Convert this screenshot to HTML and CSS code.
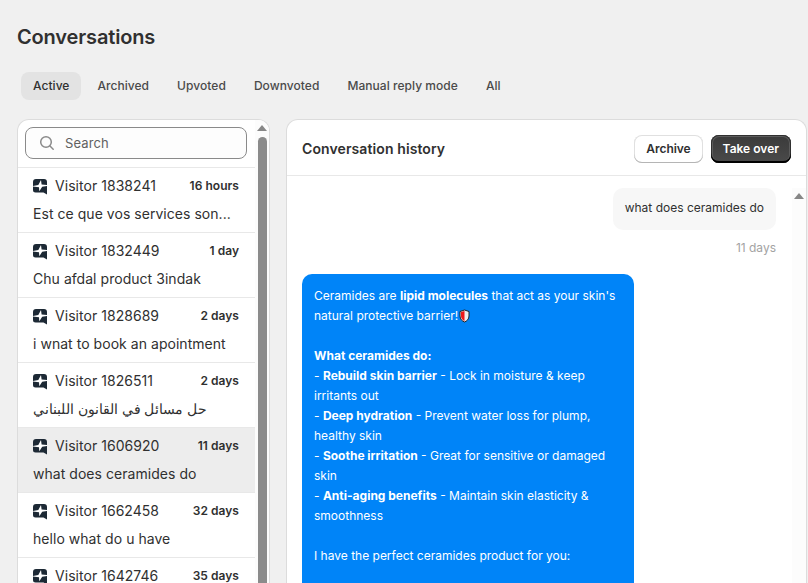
FILE: index.html
```html
<!DOCTYPE html>
<html lang="en">

<head>
	<meta charset="UTF-8">
	<meta name="viewport" content="width=device-width, initial-scale=1.0">
	<title>Conversations</title>
	<link rel="stylesheet" href="styles.css">
</head>

<body>
	<svg class="sprite" width="0" height="0">
		<symbol id="logo" viewBox="0 0 14 16">
			<path fill="#1d2935" d="M3 0h8A3 3 0 0 1 14 3V15.500L10.500 13.500H2.500A2.500 2.500 0 0 1 0 11V3A3 3 0 0 1 3 0z" />
			<path fill="#fff" d="M8 1L8.600 5.600L14 6V6.900L9.200 7.700L6.300 12.300L6 8.300L0 7.600V6.900L5.300 5.900z" />
		</symbol>
	</svg>
	<h1>Conversations</h1>
	<nav class="tabs">
		<button class="tab selected">Active</button>
		<button class="tab">Archived</button>
		<button class="tab">Upvoted</button>
		<button class="tab">Downvoted</button>
		<button class="tab">Manual reply mode</button>
		<button class="tab">All</button>
	</nav>
	<main class="panels">
		<section class="sidebar">
			<div class="list">
				<div class="search-row">
					<label class="search">
						<svg width="16" height="16" viewBox="0 0 16 16" fill="none" stroke="#8a8a8a" stroke-width="1.5" stroke-linecap="round">
							<circle cx="7" cy="7" r="5.300" />
							<path d="M11 11l3.200 3.200" />
						</svg>
						<span>Search</span>
					</label>
				</div>
				<div class="item">
					<div class="item-top"><svg class="logo"><use href="#logo" /></svg><span class="name">Visitor 1838241</span><span class="age">16 hours</span></div>
					<div class="preview">Est ce que vos services son...</div>
				</div>
				<div class="item">
					<div class="item-top"><svg class="logo"><use href="#logo" /></svg><span class="name">Visitor 1832449</span><span class="age">1 day</span></div>
					<div class="preview">Chu afdal product 3indak</div>
				</div>
				<div class="item">
					<div class="item-top"><svg class="logo"><use href="#logo" /></svg><span class="name">Visitor 1828689</span><span class="age">2 days</span></div>
					<div class="preview">i wnat to book an apointment</div>
				</div>
				<div class="item">
					<div class="item-top"><svg class="logo"><use href="#logo" /></svg><span class="name">Visitor 1826511</span><span class="age">2 days</span></div>
					<div class="preview arabic"><bdi lang="ar">حل مسائل في القانون اللبناني</bdi></div>
				</div>
				<div class="item current">
					<div class="item-top"><svg class="logo"><use href="#logo" /></svg><span class="name">Visitor 1606920</span><span class="age">11 days</span></div>
					<div class="preview">what does ceramides do</div>
				</div>
				<div class="item">
					<div class="item-top"><svg class="logo"><use href="#logo" /></svg><span class="name">Visitor 1662458</span><span class="age">32 days</span></div>
					<div class="preview">hello what do u have</div>
				</div>
				<div class="item">
					<div class="item-top"><svg class="logo"><use href="#logo" /></svg><span class="name">Visitor 1642746</span><span class="age">35 days</span></div>
				</div>
			</div>
			<div class="scrollbar">
				<div class="arrow"></div>
				<div class="thumb"></div>
			</div>
		</section>
		<section class="chat">
			<header class="chat-header">
				<h2>Conversation history</h2>
				<button class="btn">Archive</button>
				<button class="btn primary">Take over</button>
			</header>
			<div class="chat-body">
				<div class="messages">
					<div class="msg visitor">what does ceramides do</div>
					<div class="time">11 days</div>
					<div class="msg bot">
						Ceramides are <b>lipid molecules</b> that act as your skin's<br>
						natural protective barrier!<svg class="shield" width="11" height="14" viewBox="0 0 11 14"><path fill="#eee" d="M5.500 1L10 2.500V7C10 10 8 12 5.500 13C3 12 1 10 1 7V2.500z" /><path fill="#f01818" d="M5.500 2V12C3.500 11 2 9.500 2 7V3z" /><path fill="none" stroke="#222" d="M5.500 1L10 2.500V7C10 10 8 12 5.500 13C3 12 1 10 1 7V2.500z" /></svg><br>
						<br>
						<b>What ceramides do:</b><br>
						- <b>Rebuild skin barrier</b> - Lock in moisture &amp; keep<br>
						irritants out<br>
						- <b>Deep hydration</b> - Prevent water loss for plump,<br>
						healthy skin<br>
						- <b>Soothe irritation</b> - Great for sensitive or damaged<br>
						skin<br>
						- <b>Anti-aging benefits</b> - Maintain skin elasticity &amp;<br>
						smoothness<br>
						<br>
						I have the perfect ceramides product for you:<br>
						<br>
					</div>
				</div>
				<div class="scrollbar">
					<div class="arrow"></div>
				</div>
			</div>
		</section>
	</main>
</body>

</html>
```

FILE: styles.css
```css
* {
	box-sizing: border-box;
}

body {
	margin: 0;
	height: 583px;
	padding: 24px 1px 0 17px;
	display: flex;
	flex-direction: column;
	overflow: hidden;
	background: #f0f0f0;
	color: #303030;
	font-family: Inter, "Noto Sans", sans-serif;
	font-size: 12px;
	line-height: 20px;
}

.sprite {
	display: block;
	flex: none;
}

h1 {
	margin: 0;
	font-size: 20px;
	font-weight: 600;
	letter-spacing: -0.15px;
	line-height: 26px;
}

button {
	border: 0;
	background: none;
	color: inherit;
	font: inherit;
}

.tabs {
	display: flex;
	gap: 4px;
	margin: 22px 0 19px 4px;
}

.tab {
	height: 28px;
	padding: 0 12px;
	border-radius: 8px;
	color: #4a4a4a;
	font-weight: 550;
	letter-spacing: 0.05px;
	white-space: nowrap;
}

.tab.selected {
	background: #e3e3e3;
	color: #303030;
}

.panels {
	display: flex;
	flex: 1;
	gap: 16px;
	min-height: 0;
}

.sidebar {
	display: flex;
	flex: none;
	width: 253px;
	background: #fff;
	border: 1px solid #dcdcdc;
	border-bottom: 0;
	border-radius: 12px 12px 0 0;
	overflow: hidden;
}

.list {
	flex: 1;
	min-width: 0;
}

.search-row {
	height: 47px;
	padding: 7px 8px 8px 7px;
}

.search {
	display: flex;
	align-items: center;
	gap: 10px;
	height: 32px;
	padding: 0 13px;
	border: 1px solid #8a8a8a;
	border-radius: 8px;
	background: #fdfdfd;
	color: #616161;
	font-size: 13px;
	letter-spacing: 0.1px;
}

.item {
	height: 65px;
	padding: 8px 16px 0 15px;
	border-top: 1px solid #e8e8e8;
	font-size: 14px;
	letter-spacing: 0.04px;
}

.item.current {
	background: #ededed;
}

.item-top {
	display: flex;
	align-items: center;
	height: 20px;
}

.logo {
	width: 14px;
	height: 16px;
	margin: 2px 8px 0 0;
}

.age {
	margin-left: auto;
	font-size: 12px;
	font-weight: 600;
}

.preview {
	margin-top: 8px;
	white-space: nowrap;
}

.arabic {
	font-size: 13.600px;
	letter-spacing: 0;
}

.scrollbar {
	display: flex;
	flex: none;
	flex-direction: column;
	align-items: center;
	width: 14px;
	background: #fcfcfc;
}

.arrow {
	margin: 5px 0 0;
	border: 5px solid transparent;
	border-top: 0;
	border-bottom: 6px solid #878787;
}

.thumb {
	flex: 1;
	width: 9px;
	margin-top: 6px;
	border-radius: 5px 5px 0 0;
	background: #8b8b8b;
}

.chat {
	display: flex;
	flex: 1;
	flex-direction: column;
	min-width: 0;
	background: #fff;
	border: 1px solid #dcdcdc;
	border-bottom: 0;
	border-radius: 12px 12px 0 0;
	overflow: hidden;
}

.chat-header {
	display: flex;
	flex: none;
	align-items: center;
	gap: 8px;
	height: 56px;
	padding: 2px 15px 0;
	border-bottom: 1px solid #e8e8e8;
}

h2 {
	flex: 1;
	margin: 0;
	font-size: 14px;
	font-weight: 600;
	letter-spacing: 0.1px;
}

.btn {
	height: 28px;
	padding: 0 12px;
	border-radius: 8px;
	box-shadow: inset 0 -1px 0 #b5b5b5, inset 0 0 0 1px #e0e0e0;
	font-weight: 600;
	letter-spacing: -0.05px;
}

.btn.primary {
	background: linear-gradient(#3a3a3a, #4a4a4a);
	box-shadow: inset 0 -2px 0 #000, inset 0 0 0 1px #303030, inset 0 0 0 2px #5c5c5c;
	color: #fff;
	letter-spacing: 0;
}

.chat-body {
	display: flex;
	flex: 1;
	min-height: 0;
	padding-top: 12px;
}

.messages {
	display: flex;
	flex: 1;
	flex-direction: column;
	padding: 0 16px 0 15px;
}

.msg {
	flex: none;
	padding: 10px 12px;
	border-radius: 10px;
}

.visitor {
	align-self: flex-end;
	height: 42px;
	background: #f7f7f7;
}

.time {
	margin: 8px 0 16px;
	color: #a3a3a3;
	text-align: right;
}

.bot {
	width: 332px;
	padding-top: 12px;
	background: #0084f8;
	color: #fff;
	white-space: nowrap;
}

.bot b {
	font-weight: 700;
}

.shield {
	margin-left: 1px;
	vertical-align: -3px;
}
```
